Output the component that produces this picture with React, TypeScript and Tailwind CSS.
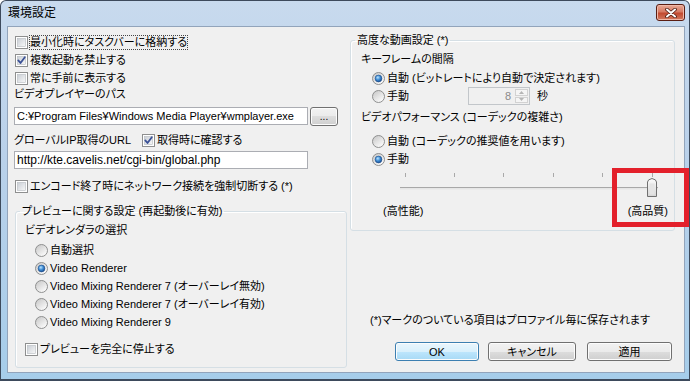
import React from "react";

function Defs() {
  return (
    <svg width="0" height="0" className="block">
      <defs>
        <linearGradient id="cbFill" x1="0" y1="0" x2="1" y2="1">
          <stop offset="0" stopColor="#c9ced5" />
          <stop offset="1" stopColor="#f8f8f8" />
        </linearGradient>
        <linearGradient id="rdFill" x1="0.2" y1="0.1" x2="0.8" y2="0.9">
          <stop offset="0" stopColor="#cdcdcd" />
          <stop offset="1" stopColor="#fbfbfb" />
        </linearGradient>
        <radialGradient id="rdDot" cx="0.4" cy="0.35" r="0.7">
          <stop offset="0" stopColor="#b9e4ff" />
          <stop offset="0.5" stopColor="#3d8bd3" />
          <stop offset="1" stopColor="#174a8c" />
        </radialGradient>
        <linearGradient id="thumbFill" x1="0" y1="0" x2="0" y2="1">
          <stop offset="0" stopColor="#fbfbfb" />
          <stop offset="1" stopColor="#d6d6d6" />
        </linearGradient>
      </defs>
    </svg>
  );
}

function CheckBox({ checked = false }: { checked?: boolean }) {
  return (
    <svg width="13" height="13" viewBox="0 0 13 13" className="shrink-0">
      <rect x="0.5" y="0.5" width="12" height="12" fill="#fff" stroke="#8e8f8f" />
      <rect x="2.5" y="2.5" width="8" height="8" fill="url(#cbFill)" stroke="#b4b9bf" strokeWidth="0.6" />
      {checked && (
        <path
          d="M3.3 6.4 L5.5 9 L9.8 3.3"
          fill="none"
          stroke="#3b5196"
          strokeWidth="1.8"
          strokeLinecap="round"
          strokeLinejoin="round"
        />
      )}
    </svg>
  );
}

function Radio({ checked = false }: { checked?: boolean }) {
  return (
    <svg width="13" height="13" viewBox="0 0 13 13" className="shrink-0">
      <circle cx="6.5" cy="6.5" r="6" fill="url(#rdFill)" stroke="#8e8f8f" />
      {checked && <circle cx="6.5" cy="6.5" r="3.4" fill="url(#rdDot)" stroke="#1d4c8a" strokeWidth="0.6" />}
    </svg>
  );
}

function CheckRow({ checked, children, focus }: { checked?: boolean; children: React.ReactNode; focus?: boolean }) {
  return (
    <div className="flex h-[18px] items-center gap-[2px] pl-[1px]">
      <CheckBox checked={checked} />
      {focus ? (
        <span className="-ml-px border border-dotted border-[#444] leading-[13px]">{children}</span>
      ) : (
        <span>{children}</span>
      )}
    </div>
  );
}

function RadioRow({ checked, children }: { checked?: boolean; children: React.ReactNode }) {
  return (
    <div className="flex h-[18px] items-center gap-[2px]">
      <Radio checked={checked} />
      <span className="whitespace-nowrap">{children}</span>
    </div>
  );
}

function Button({ children, primary, className }: { children: React.ReactNode; primary?: boolean; className: string }) {
  return (
    <div
      className={`flex h-[19px] items-center justify-center rounded-[3px] border shadow-[inset_0_0_0_1px_#fcfcfc] ${
        primary
          ? "border-[#3c7fb1] bg-[linear-gradient(#eaf6fd,#d9f0fc_50%,#bee6fd_50%,#a7d9f5)]"
          : "border-[#707070] bg-[linear-gradient(#f2f2f2,#ebebeb_50%,#dddddd_50%,#cfcfcf)]"
      } ${className}`}
    >
      {children}
    </div>
  );
}

function CloseButton() {
  return (
    <div className="ml-auto mt-[3px] flex h-[17px] w-[29px] items-center justify-center rounded-[3px] border border-[#5a1d12] bg-[linear-gradient(#e9a996,#d67a63_45%,#c24a30_55%,#d27a5f)] shadow-[inset_0_0_0_1px_#f0b8a8]">
      <svg width="12" height="10" viewBox="0 0 12 10">
        <path d="M2 1.5 L10 8.5 M10 1.5 L2 8.5" stroke="#4a1a10" strokeWidth="3.6" strokeLinecap="round" />
        <path d="M2 1.5 L10 8.5 M10 1.5 L2 8.5" stroke="#fff" strokeWidth="2" strokeLinecap="round" />
      </svg>
    </div>
  );
}

function Slider() {
  const ticks = [44, 93, 142, 192, 241, 291];
  return (
    <svg width="313" height="32" viewBox="0 0 313 32" className="block">
      {ticks.map((x) => (
        <line key={x} x1={x + 0.5} y1="5" x2={x + 0.5} y2="9" stroke="#a9a9a9" />
      ))}
      <rect x="39" y="19.5" width="258" height="2" fill="#e6e6e6" />
      <line x1="39" y1="19.5" x2="297" y2="19.5" stroke="#a8a8a8" />
      <path
        d="M286.5 14 Q286.5 11.5 291 10.5 Q295.5 11.5 295.5 14 L295.5 28.5 L286.5 28.5 Z"
        fill="url(#thumbFill)"
        stroke="#707070"
      />
      <rect x="288.5" y="15.5" width="5" height="11" fill="#e4e4e4" />
    </svg>
  );
}

function SpinBox() {
  return (
    <div className="flex h-[18px] w-[62px] border border-[#c2c6ca] bg-[#f0f0f0]">
      <div className="flex flex-1 items-center justify-end pr-[3px] text-[#8a8a8a]">8</div>
      <div className="flex w-[15px] flex-col gap-px p-px">
        <div className="flex flex-1 items-center justify-center border border-[#d2d2d2] bg-[#f5f5f5]">
          <svg width="5" height="3" viewBox="0 0 5 3">
            <path d="M0 3 L2.5 0 L5 3 Z" fill="#b5b5b5" />
          </svg>
        </div>
        <div className="flex flex-1 items-center justify-center border border-[#d2d2d2] bg-[#f5f5f5]">
          <svg width="5" height="3" viewBox="0 0 5 3">
            <path d="M0 0 L2.5 3 L5 0 Z" fill="#b5b5b5" />
          </svg>
        </div>
      </div>
    </div>
  );
}

export default function App() {
  return (
    <div className="relative h-[381px] w-[690px] overflow-hidden font-['Liberation_Sans','Noto_Sans_CJK_JP',sans-serif] text-[11px] leading-[14px] text-black [font-feature-settings:'palt']">
      <Defs />
      <div className="flex h-full flex-col rounded-t-[6px] border border-b-2 border-[#3d4a5c] bg-[linear-gradient(180deg,#c8daee_0%,#bad1ea_40%,#a6cdea_100%)]">
        <div className="flex h-[25px] items-start pl-[7px] pr-[4px]">
          <span className="mt-[5px] text-[12px] leading-[14px]">環境設定</span>
          <CloseButton />
        </div>

        <div className="mb-[6px] ml-[6px] mr-[4px] flex flex-1 border border-[#92a4bb] bg-[#f0f0f0]">
          {/* left column */}
          <div className="flex w-[340px] flex-col pl-[6px] pt-[6px]">
            <CheckRow focus>最小化時にタスクバーに格納する</CheckRow>
            <CheckRow checked>複数起動を禁止する</CheckRow>
            <CheckRow>常に手前に表示する</CheckRow>
            <div className="h-[14px]">ビデオプレイヤーのパス</div>
            <div className="mt-[6px] flex items-start gap-[2px]">
              <div className="flex h-[18px] w-[294px] items-center overflow-hidden whitespace-nowrap border border-[#abadb3] bg-white pl-[2px] text-[11px]">
                C:¥Program Files¥Windows Media Player¥wmplayer.exe
              </div>
              <Button className="h-[17px] w-[28px] text-[10px]">...</Button>
            </div>
            <div className="mt-[7px] flex h-[14px] items-center">
              <span className="w-[128px]">グローバルIP取得のURL</span>
              <CheckBox checked />
              <span className="ml-[2px]">取得時に確認する</span>
            </div>
            <div className="mt-[4px] flex h-[18px] w-[294px] items-center whitespace-nowrap border border-[#abadb3] bg-white pl-[2px] text-[12px]">
              http://kte.cavelis.net/cgi-bin/global.php
            </div>
            <div className="mt-[8px]">
              <CheckRow>エンコード終了時にネットワーク接続を強制切断する (*)</CheckRow>
            </div>

            <fieldset className="ml-px mt-[9px] w-[332px] rounded-[3px] border border-[#d5dfe5] shadow-[inset_1px_1px_0_#fff]">
              <legend className="ml-[4px] h-[14px] px-[2px]">プレビューに関する設定 (再起動後に有効)</legend>
              <div className="pb-[9px] pl-[9px] pt-[5px]">
                <div className="h-[14px]">ビデオレンダラの選択</div>
                <div className="mt-[4px] pl-[10px]">
                  <RadioRow>自動選択</RadioRow>
                  <RadioRow checked>Video Renderer</RadioRow>
                  <RadioRow>Video Mixing Renderer 7 (オーバーレイ無効)</RadioRow>
                  <RadioRow>Video Mixing Renderer 7 (オーバーレイ有効)</RadioRow>
                  <RadioRow>Video Mixing Renderer 9</RadioRow>
                </div>
                <div className="mt-[9px] flex h-[18px] items-center gap-[2px]">
                  <CheckBox />
                  <span>プレビューを完全に停止する</span>
                </div>
              </div>
            </fieldset>
          </div>

          {/* right column */}
          <div className="ml-[2px] flex w-[325px] flex-col pt-[6px]">
            <fieldset className="w-[325px] rounded-[3px] border border-[#d5dfe5] shadow-[inset_1px_1px_0_#fff]">
              <legend className="ml-[4px] h-[14px] px-[2px]">高度な動画設定 (*)</legend>
              <div className="pb-[12px] pl-[10px] pt-[5px]">
                <div className="h-[14px]">キーフレームの間隔</div>
                <div className="mt-[3px] pl-[11px]">
                  <RadioRow checked>自動 (ビットレートにより自動で決定されます)</RadioRow>
                  <div className="flex h-[18px] items-center">
                    <Radio />
                    <span className="ml-[2px] w-[81px]">手動</span>
                    <SpinBox />
                    <span className="ml-[7px]">秒</span>
                  </div>
                </div>
                <div className="mt-[5px] h-[14px]">ビデオパフォーマンス (コーデックの複雑さ)</div>
                <div className="mt-[8px] pl-[11px]">
                  <RadioRow>自動 (コーデックの推奨値を用います)</RadioRow>
                  <RadioRow checked>手動</RadioRow>
                </div>
                <Slider />
                <div className="mt-[4px] flex h-[14px] items-center">
                  <span className="ml-[22px]">(高性能)</span>
                  <span className="ml-auto mr-[6px]">(高品質)</span>
                </div>
              </div>
            </fieldset>

            <div className="ml-[20px] mt-[82px] h-[14px]">(*)マークのついている項目はプロファイル毎に保存されます</div>

            <div className="mt-[15px] flex">
              <Button primary className="ml-[45px] w-[84px]">OK</Button>
              <Button className="ml-[9px] w-[88px]">キャンセル</Button>
              <Button className="ml-[11px] w-[85px]">適用</Button>
            </div>
          </div>
        </div>
      </div>

      <div className="absolute left-[612px] top-[168px] h-[59px] w-[77px] border-[5px] border-[#e3202b]" />
    </div>
  );
}
